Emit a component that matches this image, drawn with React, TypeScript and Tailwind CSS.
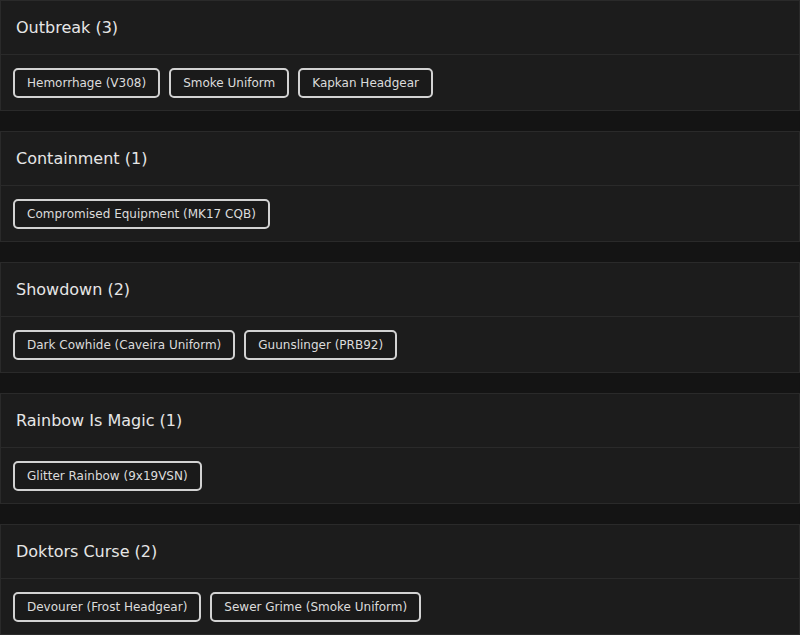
import React from 'react';

interface EventGroup {
  name: string;
  items: string[];
}

const events: EventGroup[] = [
  { name: 'Outbreak', items: ['Hemorrhage (V308)', 'Smoke Uniform', 'Kapkan Headgear'] },
  { name: 'Containment', items: ['Compromised Equipment (MK17 CQB)'] },
  { name: 'Showdown', items: ['Dark Cowhide (Caveira Uniform)', 'Guunslinger (PRB92)'] },
  { name: 'Rainbow Is Magic', items: ['Glitter Rainbow (9x19VSN)'] },
  { name: 'Doktors Curse', items: ['Devourer (Frost Headgear)', 'Sewer Grime (Smoke Uniform)'] },
];

const EventCard: React.FC<{ group: EventGroup }> = ({ group }) => {
  return (
    <div className="border border-[#2a2a2a] bg-[#1c1c1c]">
      <div className="h-[54px] flex items-center px-[15px] border-b border-[#2a2a2a]">
        <h2 className="text-[16px] text-[#e6e6e6]">
          {group.name} ({group.items.length})
        </h2>
      </div>
      <div className="flex flex-wrap gap-[9px] px-3 pt-[13px] pb-3">
        {group.items.map((item) => (
          <span
            key={item}
            className="h-[30px] flex items-center px-3 border-2 border-[#d2d2d2] rounded-[5px] bg-[#1a1a1a] text-[12px] text-[#dcdcdc]"
          >
            {item}
          </span>
        ))}
      </div>
    </div>
  );
};

export default function App() {
  return (
    <div
      className="min-h-screen bg-[#141414] flex flex-col gap-5"
      style={{ fontFamily: '"DejaVu Sans", sans-serif' }}
    >
      {events.map((group) => (
        <EventCard key={group.name} group={group} />
      ))}
    </div>
  );
}
